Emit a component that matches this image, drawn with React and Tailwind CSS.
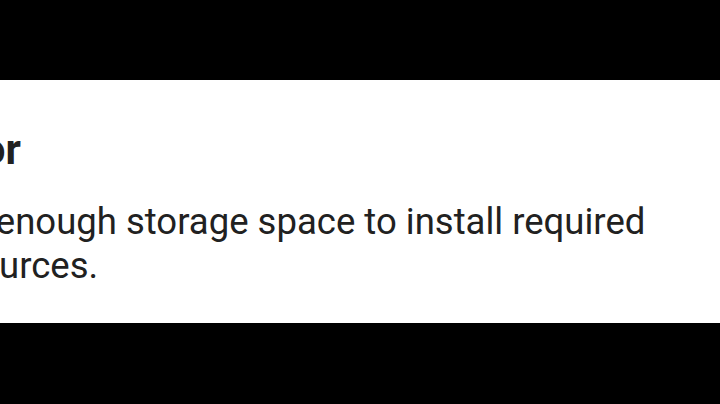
import React from 'react';

const App = () => {
    return (
        <div className="w-[720px] h-[404px] bg-black overflow-hidden flex flex-col" style={{ fontFamily: 'Roboto, "Noto Sans", sans-serif' }}>
            <div className="h-[80px] shrink-0" />
            {/* dialog body, clipped on the left */}
            <div className="h-[243px] shrink-0 bg-white overflow-hidden">
                <div className="ml-[-72px] w-[760px] pt-[45px] text-[#212121]">
                    <h1 className="text-[42px] leading-[50px] font-bold">Error</h1>
                    <p className="mt-[25px] text-[36.5px] leading-[44px]">
                        Not enough storage space to install required resources.
                    </p>
                </div>
            </div>
            <div className="flex-1" />
        </div>
    );
};

export default App;
